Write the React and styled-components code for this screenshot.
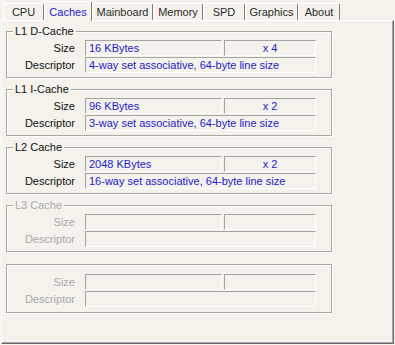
import styled, { createGlobalStyle } from "styled-components";

const BG = "#f4f2eb";

const GlobalStyle = createGlobalStyle`
  body {
    margin: 0;
    background: ${BG};
    font-family: "Liberation Sans", Arial, sans-serif;
    font-size: 11px;
  }
`;

const Window = styled.div`
  width: 395px;
  height: 345px;
  box-sizing: border-box;
  padding-left: 1px;
  background: ${BG};
  display: flex;
  flex-direction: column;
`;

const TabBar = styled.div`
  display: flex;
  align-items: flex-end;
  height: 20px;
  padding-left: 2px;
  position: relative;
  z-index: 1;
`;

const Tab = styled.div`
  box-sizing: border-box;
  width: ${({ $w }) => $w}px;
  height: ${({ $active }) => ($active ? 20 : 17)}px;
  margin-bottom: ${({ $active }) => ($active ? -1 : 0)}px;
  border-top: 1px solid #fff;
  border-left: 1px solid #fff;
  border-right: 1px solid #7c7c7c;
  border-radius: 2px 2px 0 0;
  background: ${BG};
  color: ${({ $active }) => ($active ? "#1c1cd4" : "#2a2a2a")};
  display: flex;
  align-items: center;
  justify-content: center;
  line-height: 14px;
`;

const Panel = styled.div`
  box-sizing: border-box;
  width: 393px;
  height: 324px;
  border-top: 1px solid #fff;
  border-left: 1px solid #fff;
  border-right: 1px solid #6c6c6c;
  border-bottom: 1px solid #6c6c6c;
  box-shadow: inset -1px -1px 0 #a6a6a6;
  padding: 3px 0 0 4px;
  display: flex;
  flex-direction: column;
  gap: 4px;
`;

const Group = styled.fieldset`
  box-sizing: border-box;
  width: 326px;
  min-width: 0;
  margin: ${({ $bare }) => ($bare ? "8px 0 0" : "0")};
  padding: ${({ $bare }) => ($bare ? "9px 0 5px" : "2px 0 4px")};
  border: 1px solid #a9a8a0;
  box-shadow: inset 1px 1px 0 #fff, 1px 1px 0 #fff;
`;

const Legend = styled.legend`
  margin-left: 6px;
  padding: 0 2px;
  line-height: 14px;
  background: ${BG};
  color: ${({ $disabled }) => ($disabled ? "#a9a9a9" : "#111")};
`;

const Row = styled.div`
  display: flex;
  align-items: center;
  height: 16px;
  & + & {
    margin-top: 1px;
  }
`;

const Label = styled.div`
  width: 68px;
  margin-right: 10px;
  text-align: right;
  line-height: 14px;
  color: ${({ $disabled }) => ($disabled ? "#a9a9a9" : "#111")};
`;

const Field = styled.div`
  box-sizing: border-box;
  width: ${({ $w }) => $w}px;
  height: 16px;
  margin-left: ${({ $gap }) => $gap || 0}px;
  border-top: 1px solid #a3a3a3;
  border-left: 1px solid #a3a3a3;
  border-bottom: 1px solid #fff;
  border-right: 1px solid #fff;
  padding-left: ${({ $center }) => ($center ? 0 : 3)}px;
  text-align: ${({ $center }) => ($center ? "center" : "left")};
  line-height: 14px;
  color: #1c1cc8;
  white-space: nowrap;
  overflow: hidden;
`;

const tabs = [
  { name: "CPU", w: 41 },
  { name: "Caches", w: 48, active: true },
  { name: "Mainboard", w: 61 },
  { name: "Memory", w: 50 },
  { name: "SPD", w: 42 },
  { name: "Graphics", w: 53 },
  { name: "About", w: 42 },
];

const caches = [
  { title: "L1 D-Cache", size: "16 KBytes", count: "x 4", desc: "4-way set associative, 64-byte line size" },
  { title: "L1 I-Cache", size: "96 KBytes", count: "x 2", desc: "3-way set associative, 64-byte line size" },
  { title: "L2 Cache", size: "2048 KBytes", count: "x 2", desc: "16-way set associative, 64-byte line size" },
  { title: "L3 Cache", disabled: true },
  { title: "", disabled: true, bare: true },
];

const CacheGroup = ({ title, size, count, desc, disabled, bare }) => (
  <Group $bare={bare}>
    {!bare && <Legend $disabled={disabled}>{title}</Legend>}
    <Row>
      <Label $disabled={disabled}>Size</Label>
      <Field $w={137}>{size}</Field>
      <Field $w={92} $gap={2} $center>{count}</Field>
    </Row>
    <Row>
      <Label $disabled={disabled}>Descriptor</Label>
      <Field $w={231}>{desc}</Field>
    </Row>
  </Group>
);

export default function App() {
  return (
    <>
      <GlobalStyle />
      <Window>
        <TabBar>
          {tabs.map((t) => (
            <Tab key={t.name} $w={t.w} $active={t.active}>
              {t.name}
            </Tab>
          ))}
        </TabBar>
        <Panel>
          {caches.map((c, i) => (
            <CacheGroup key={i} {...c} />
          ))}
        </Panel>
      </Window>
    </>
  );
}
